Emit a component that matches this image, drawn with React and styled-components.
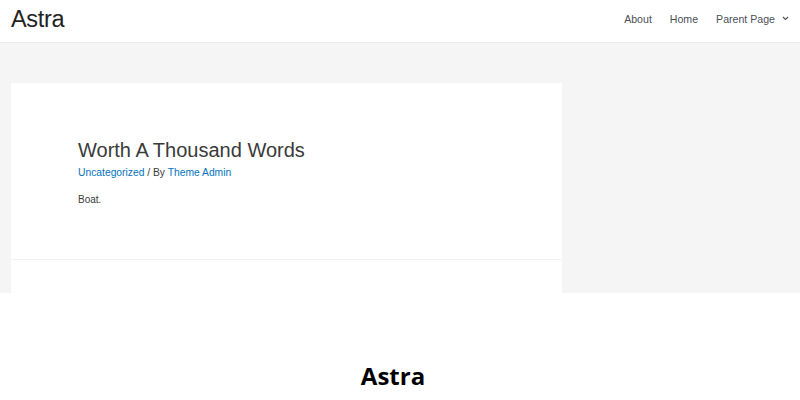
import React from "react"
import styled, { createGlobalStyle } from "styled-components"

const GlobalStyle = createGlobalStyle`
  html, body {
    margin: 0;
    padding: 0;
    background: #ffffff;
  }
  body {
    font-family: "Liberation Sans", Arial, sans-serif;
    width: 800px;
    height: 400px;
    overflow: hidden;
  }
`

const Page = styled.div`
  width: 800px;
  height: 400px;
  display: flex;
  flex-direction: column;
`

const Header = styled.header`
  height: 42px;
  flex: none;
  display: flex;
  align-items: center;
  justify-content: space-between;
  padding: 0 11px 0 11px;
  border-bottom: 1px solid #ebebeb;
  box-sizing: content-box;
`

const Logo = styled.div`
  font-family: "Liberation Sans", Arial, sans-serif;
  font-size: 23.5px;
  color: #222222;
  letter-spacing: -0.3px;
  margin-top: -4px;
`

const Nav = styled.nav`
  display: flex;
  align-items: center;
  gap: 18px;
  margin-top: -5px;
`

const NavItem = styled.a`
  font-size: 10.6px;
  color: #4b4f58;
  text-decoration: none;
  display: flex;
  align-items: center;
  gap: 7px;
`

const Content = styled.main`
  height: 250px;
  flex: none;
  background: #f5f5f5;
  padding: 40px 0 0 11px;
  box-sizing: border-box;
`

const Card = styled.article`
  width: 551px;
  height: 210px;
  background: #ffffff;
  display: flex;
  flex-direction: column;
`

const Entry = styled.div`
  height: 177px;
  box-sizing: border-box;
  padding: 54px 0 0 67px;
  border-bottom: 1px solid #f2f2f2;
`

const Title = styled.h2`
  margin: 0;
  font-family: "Liberation Sans", Arial, sans-serif;
  font-weight: 400;
  font-size: 20px;
  color: #3a3a3a;
  line-height: 26px;
`

const Meta = styled.div`
  margin-top: 4px;
  font-size: 10.3px;
  color: #3a3a3a;
  a {
    color: #0274be;
    text-decoration: none;
  }
`

const Excerpt = styled.p`
  margin: 16px 0 0;
  font-size: 10px;
  color: #3a3a3a;
`

const Caption = styled.div`
  flex: 1;
  display: flex;
  align-items: flex-start;
  justify-content: center;
  padding: 66px 14px 0 0;
  font-family: "Open Sans", sans-serif;
  font-weight: 700;
  font-size: 24px;
  color: #000000;
`

const Caret = () => (
  <svg width="7" height="5" viewBox="0 0 7 5" fill="none">
    <path d="M1 1l2.5 2.5L6 1" stroke="#4b4f58" strokeWidth="1.1" />
  </svg>
)

export default function App() {
  return (
    <Page>
      <GlobalStyle />
      <Header>
        <Logo>Astra</Logo>
        <Nav>
          <NavItem href="#">About</NavItem>
          <NavItem href="#">Home</NavItem>
          <NavItem href="#">
            Parent Page <Caret />
          </NavItem>
        </Nav>
      </Header>
      <Content>
        <Card>
          <Entry>
            <Title>Worth A Thousand Words</Title>
            <Meta>
              <a href="#">Uncategorized</a> / By <a href="#">Theme Admin</a>
            </Meta>
            <Excerpt>Boat.</Excerpt>
          </Entry>
        </Card>
      </Content>
      <Caption>Astra</Caption>
    </Page>
  )
}
